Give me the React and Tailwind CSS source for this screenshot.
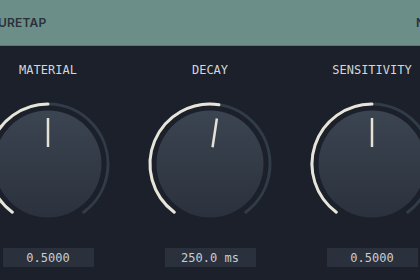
import React from "react";

const START = -143.5;
const END = 143.5;

const polar = (cx, cy, r, deg) => {
  const a = (deg * Math.PI) / 180;
  return [cx + r * Math.sin(a), cy - r * Math.cos(a)];
};

const arc = (cx, cy, r, from, to) => {
  const [x1, y1] = polar(cx, cy, r, from);
  const [x2, y2] = polar(cx, cy, r, to);
  const large = to - from > 180 ? 1 : 0;
  return `M ${x1} ${y1} A ${r} ${r} 0 ${large} 1 ${x2} ${y2}`;
};

const Knob = ({ value }) => {
  const angle = START + (END - START) * value;
  const [ix1, iy1] = polar(65, 65, 17, angle);
  const [ix2, iy2] = polar(65, 65, 46, angle);
  return (
    <svg width="130" height="130" viewBox="0 0 130 130">
      <defs>
        <linearGradient id="knobBody" x1="0" y1="0" x2="0" y2="1">
          <stop offset="0%" stopColor="#3b4451" />
          <stop offset="100%" stopColor="#2b323d" />
        </linearGradient>
      </defs>
      <path d={arc(65, 65, 60, START, END)} fill="none" stroke="#323b48" strokeWidth="3" strokeLinecap="round" />
      <path d={arc(65, 65, 60, START, angle)} fill="none" stroke="#e7e4d8" strokeWidth="3" strokeLinecap="round" />
      <circle cx="65" cy="65" r="53.5" fill="url(#knobBody)" />
      <line x1={ix1} y1={iy1} x2={ix2} y2={iy2} stroke="#e4e1d5" strokeWidth="2.5" />
    </svg>
  );
};

const params = [
  { label: "MATERIAL", value: 0.5, text: "0.5000" },
  { label: "DECAY", value: 0.53, text: "250.0 ms" },
  { label: "SENSITIVITY", value: 0.5, text: "0.5000" },
];

export default function App() {
  return (
    <div className="w-[420px] h-[280px] overflow-hidden bg-[#1b202b]">
      <div className="ml-[-33px] w-[486px]">
        {/* header bar */}
        <div className="h-[46px] bg-[#6b8e89] border-b border-[#5a7773] flex items-center pl-[23px] font-['Inter',sans-serif] text-[12px] font-semibold text-[#2a3139]">
          <span className="w-[426px] shrink-0 tracking-[0.2px]">PURETAP</span>
          <span>NORMAL</span>
        </div>

        <div className="grid grid-cols-3">
          {params.map((p) => (
            <div key={p.label} className="flex flex-col items-center pt-[16px]">
              <div className="font-['DejaVu_Sans_Mono',monospace] text-[12px] leading-[16px] text-[#d3d6da]">
                {p.label}
              </div>
              <div className="mt-[21px]">
                <Knob value={p.value} />
              </div>
              <div className="mt-[19px] w-[91px] h-[19px] bg-[#2b313c] flex items-center justify-center font-['DejaVu_Sans_Mono',monospace] text-[12px] text-[#c9cdd1]">
                {p.text}
              </div>
            </div>
          ))}
        </div>
      </div>
    </div>
  );
}
